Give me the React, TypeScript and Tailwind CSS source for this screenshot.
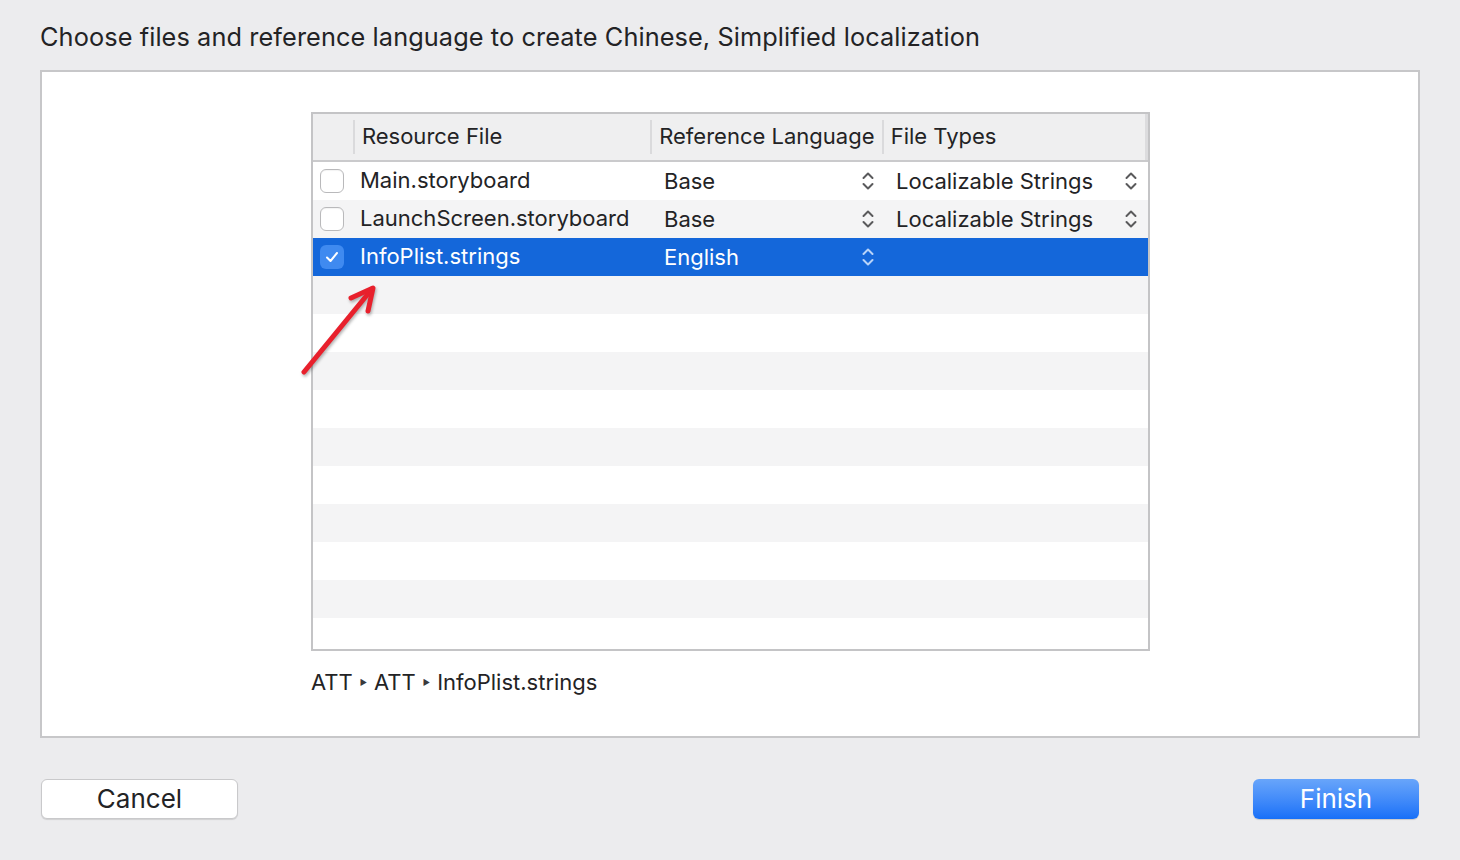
import React from 'react';

type Row = {
    name: string;
    lang: string;
    type?: string;
    checked?: boolean;
    selected?: boolean;
};

const rows: Row[] = [
    { name: 'Main.storyboard', lang: 'Base', type: 'Localizable Strings' },
    { name: 'LaunchScreen.storyboard', lang: 'Base', type: 'Localizable Strings' },
    { name: 'InfoPlist.strings', lang: 'English', checked: true, selected: true },
];

// empty striped rows under the real ones
const emptyRows = Array.from({ length: 10 }, (_, i) => i);

const Stepper = ({ light }: { light?: boolean }) => (
    <svg width="14" height="22" viewBox="0 0 14 22" fill="none">
        <path
            d="M2.5 8 L7 3.5 L11.5 8 M2.5 14 L7 18.5 L11.5 14"
            stroke={light ? '#b8d3f8' : '#5a5a5c'}
            strokeWidth="2"
            strokeLinecap="round"
            strokeLinejoin="round"
        />
    </svg>
);

const CheckBox = ({ checked }: { checked?: boolean }) => {
    if (checked) {
        return (
            <div className="w-6 h-6 rounded-[6px] bg-[#3f8af0] flex items-center justify-center">
                <svg width="16" height="16" viewBox="0 0 16 16" fill="none">
                    <path d="M3 8.5 L6.5 12 L13 4" stroke="#fff" strokeWidth="2" strokeLinecap="round" strokeLinejoin="round" />
                </svg>
            </div>
        );
    }

    return <div className="w-6 h-6 rounded-[6px] border border-[#b9b9bb] bg-white shadow-[inset_0_1px_1px_rgba(0,0,0,0.05)]" />;
};

const HeaderDivider = () => <div className="w-[2px] h-[34px] bg-[#dadadc]" />;

const App = () => (
    <div className="relative w-[1460px] h-[860px] bg-[#ececee] font-['Inter',sans-serif] text-[#232325] px-10 pt-[22px]">
        <h1 className="text-[25.3px] leading-[30px] tracking-[0.1px]">
            Choose files and reference language to create Chinese, Simplified localization
        </h1>

        <div className="mt-[18px] w-[1380px] h-[668px] bg-white border-2 border-[#c7c7c9] pt-[40px] pl-[269px]">
            <div className="w-[839px] h-[539px] border-2 border-[#c4c4c6] flex flex-col overflow-hidden">
                <div className="h-[48px] shrink-0 bg-[#efeff0] border-b-2 border-[#cacacc] flex items-center text-[22px]">
                    <div className="w-[40px]" />
                    <HeaderDivider />
                    <div className="w-[296px] pl-[7px] -mt-[2px]">Resource File</div>
                    <HeaderDivider />
                    <div className="w-[230px] pl-[7px] -mt-[2px]">Reference Language</div>
                    <HeaderDivider />
                    <div className="w-[262px] pl-[7px] -mt-[2px]">File Types</div>
                    <div className="w-[3px] h-[46px] bg-[#dcdcde]" />
                </div>

                {rows.map((row, i) => {
                    let bg = i % 2 === 0 ? 'bg-white' : 'bg-[#f4f4f5]';

                    if (row.selected) {
                        bg = 'bg-[#1467da] text-white';
                    }

                    return (
                        <div key={row.name} className={`h-[38px] shrink-0 flex items-center text-[22px] ${bg}`}>
                            <div className="w-[47px] pl-[7px]">
                                <CheckBox checked={row.checked} />
                            </div>
                            <div className="w-[291px] -mt-[2px]">{row.name}</div>
                            <div className="w-[232px] pl-[13px] pr-[8px] flex items-center justify-between">
                                <span>{row.lang}</span>
                                <Stepper light={row.selected} />
                            </div>
                            {row.type && (
                                <div className="w-[264px] pl-[13px] pr-[9px] flex items-center justify-between">
                                    <span>{row.type}</span>
                                    <Stepper />
                                </div>
                            )}
                        </div>
                    );
                })}

                {emptyRows.map((i) => (
                    <div key={i} className={`h-[38px] shrink-0 ${i % 2 === 0 ? 'bg-[#f4f4f5]' : 'bg-white'}`} />
                ))}
            </div>

            <div className="mt-[18px] text-[22px] leading-[26px] flex items-center gap-[7px]">
                <span>ATT</span>
                <span className="text-[8px] text-[#3a3a3c]">&#9654;</span>
                <span>ATT</span>
                <span className="text-[8px] text-[#3a3a3c]">&#9654;</span>
                <span>InfoPlist.strings</span>
            </div>
        </div>

        <div className="mt-[41px] flex justify-between pl-px pr-px">
            <button className="w-[197px] h-[40px] rounded-[6px] bg-white border border-[#c9c9cb] shadow-[0_1px_1px_rgba(0,0,0,0.12)] text-[26px] leading-none text-[#232325]">
                Cancel
            </button>
            <button className="w-[166px] h-[40px] rounded-[6px] bg-gradient-to-b from-[#68a5fa] to-[#1670f8] shadow-[0_1px_1px_rgba(0,0,0,0.15)] text-[26px] leading-none text-white">
                Finish
            </button>
        </div>

        {/* red annotation arrow over the table */}
        <svg className="absolute left-[295px] top-[280px]" width="90" height="100" viewBox="0 0 90 100" fill="none">
            <g stroke="#e8202c" strokeWidth="5" strokeLinecap="round" strokeLinejoin="round" style={{ filter: 'drop-shadow(1px 2px 1.5px rgba(0,0,0,0.3))' }}>
                <path d="M9 92 L77 9" />
                <path d="M56 18 L78 8 L73 31" />
            </g>
        </svg>
    </div>
);

export default App;
